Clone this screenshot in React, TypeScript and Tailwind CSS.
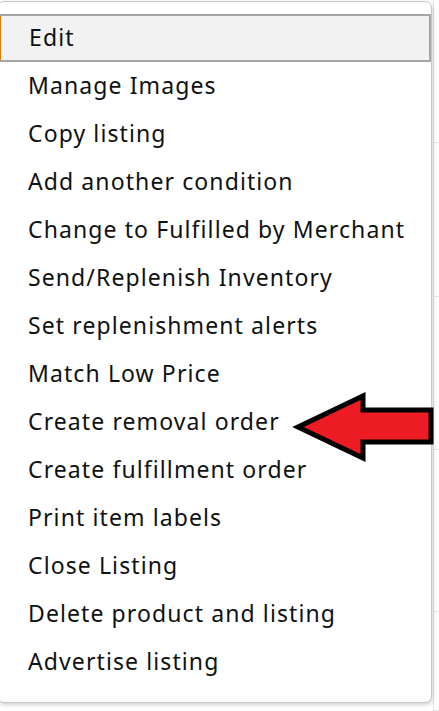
import React from "react";

const actions = [
  "Edit",
  "Manage Images",
  "Copy listing",
  "Add another condition",
  "Change to Fulfilled by Merchant",
  "Send/Replenish Inventory",
  "Set replenishment alerts",
  "Match Low Price",
  "Create removal order",
  "Create fulfillment order",
  "Print item labels",
  "Close Listing",
  "Delete product and listing",
  "Advertise listing",
];

// faint table rows of the page behind the menu
const bgRows = [143, 154, 153, 162, 99];

function RedArrow() {
  return (
    <svg width="146" height="76" viewBox="0 0 146 76" className="absolute left-[292px] top-[390px]">
      <polygon
        points="6,37 71,6 71,20 139,20 139,52 71,52 71,68"
        fill="#ed1c24"
        stroke="#000"
        strokeWidth="5"
        strokeLinejoin="miter"
      />
    </svg>
  );
}

export default function App() {
  return (
    <div className="relative w-[439px] h-[711px] bg-white overflow-hidden" style={{ fontFamily: '"Noto Sans", "Open Sans", sans-serif' }}>
      {/* page behind */}
      <div className="flex flex-col border-l border-[#e3e3e3] ml-[433px] h-full">
        {bgRows.map((h, i) => (
          <div key={i} className="border-b border-[#e7e7e7]" style={{ height: h }} />
        ))}
      </div>

      {/* dropdown menu */}
      <div className="absolute left-[-3px] top-[1px] w-[435px] h-[702px] bg-white border border-[#c8c8c8] rounded-[7px] shadow-[1px_2px_4px_rgba(0,0,0,0.18)] pt-[12px] pb-[16px]">
        <ul className="flex flex-col">
          {actions.map((a, i) => (
            <li
              key={a}
              className={
                i === 0
                  ? "h-[48px] flex items-center pb-[2px] pl-[28px] text-[23px] tracking-[1.1px] text-[#0f1111] bg-[#f2f2f2] border-y-2 border-r-2 border-[#a6a6a6] border-l-[3px] border-l-[#e77600]"
                  : "h-[48px] flex items-center pb-[2px] pl-[30px] text-[23px] tracking-[1.1px] text-[#0f1111]"
              }
            >
              {a}
            </li>
          ))}
        </ul>
      </div>

      <RedArrow />
    </div>
  );
}
